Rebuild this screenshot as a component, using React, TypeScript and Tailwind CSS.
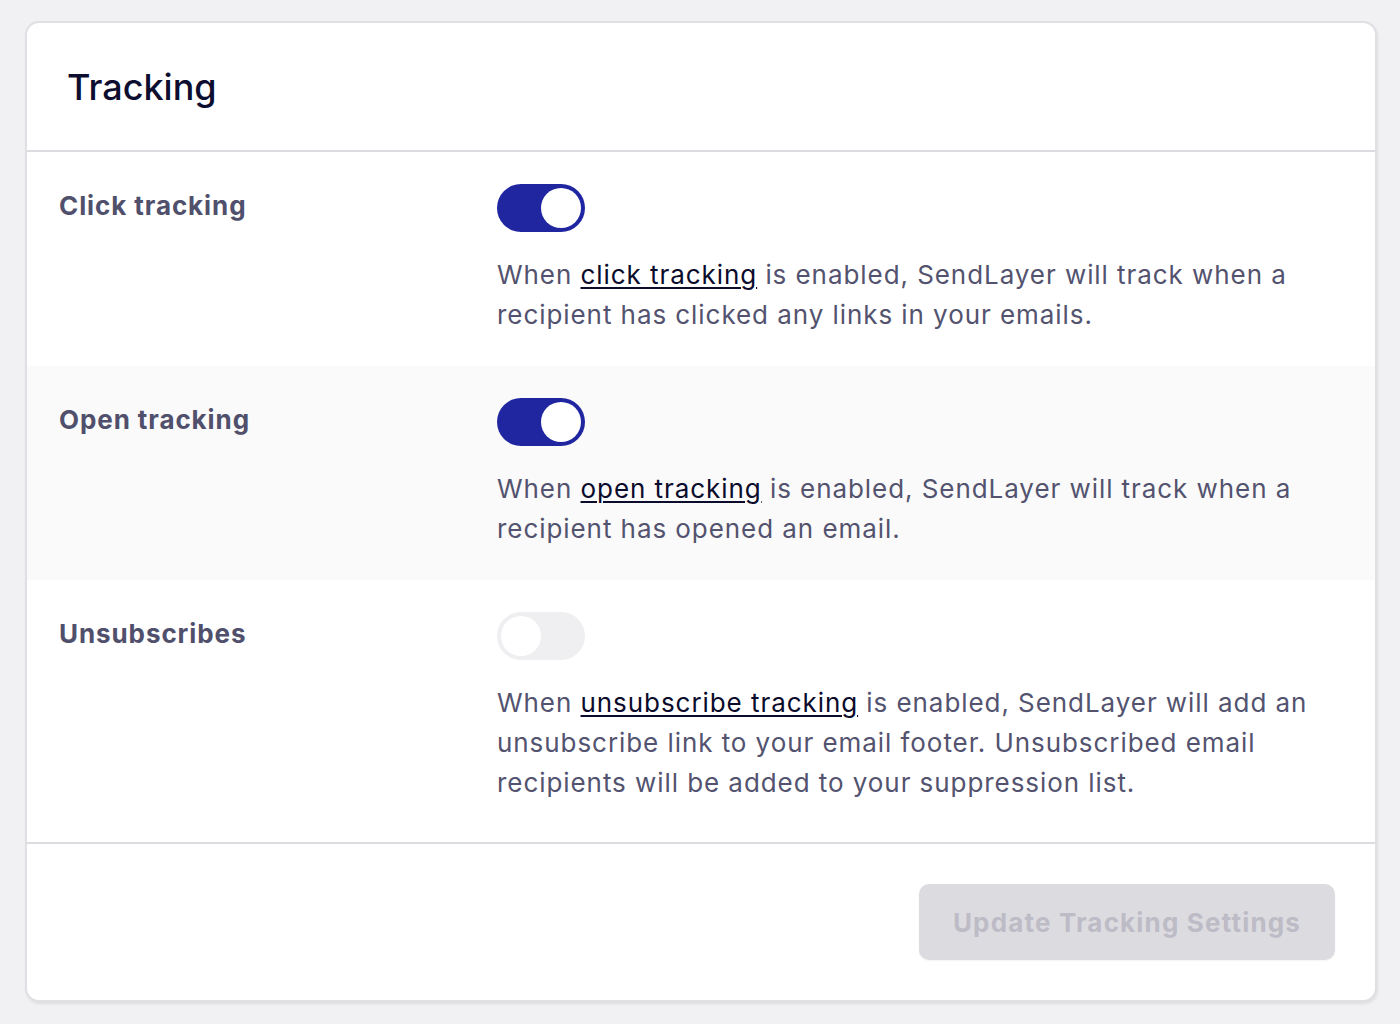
import React from "react";

function Toggle({ on }: { on: boolean }) {
  return (
    <div
      className={`relative w-[88px] h-[48px] rounded-full ${on ? "bg-[#2026a0]" : "bg-[#efeff1]"}`}
    >
      <div
        className={`absolute top-[4px] w-[40px] h-[40px] rounded-full bg-white ${on ? "left-[44px]" : "left-[4px]"}`}
      />
    </div>
  );
}

function Row({
  label,
  on,
  children,
  gray,
  last,
}: {
  label: string;
  on: boolean;
  children: React.ReactNode;
  gray?: boolean;
  last?: boolean;
}) {
  return (
    <div
      className={`flex pl-[32px] pr-[32px] pt-[32px] ${last ? "pb-[39px]" : "pb-[31px]"} ${gray ? "bg-[#fafafa]" : "bg-white"}`}
    >
      <div className="w-[438px] shrink-0 pt-[2px] text-[26px] leading-[40px] font-bold tracking-[0.035em] text-[#50506c]">
        {label}
      </div>
      <div className="flex-1 flex flex-col">
        <Toggle on={on} />
        <p className="mt-[23px] text-[26px] leading-[40px] text-[#53536f] tracking-[0.036em]">
          {children}
        </p>
      </div>
    </div>
  );
}

export default function App() {
  return (
    <div
      className="min-h-[1024px] bg-[#f1f1f3] pl-[25px] pr-[23px] pt-[21px] pb-[23px]"
      style={{ fontFamily: "Inter, 'Noto Sans', sans-serif" }}
    >
      <div className="bg-white border-2 border-[#e0dfe4] rounded-[14px] shadow-[1px_2px_3px_rgba(0,0,0,0.08)] overflow-hidden">
        <div className="h-[129px] border-b-2 border-[#dcdbe0] flex items-center pl-[40px]">
          <h1 className="text-[36px] font-medium text-[#0d0d2f] leading-none">Tracking</h1>
        </div>
        <Row label="Click tracking" on={true}>
          When{" "}
          <a className="underline text-[#0b0b2b] underline-offset-[3px] decoration-[2px]">click tracking</a>{" "}
          is enabled, SendLayer will track when a recipient has clicked any links in your emails.
        </Row>
        <Row label="Open tracking" on={true} gray>
          When{" "}
          <a className="underline text-[#0b0b2b] underline-offset-[3px] decoration-[2px]">open tracking</a>{" "}
          is enabled, SendLayer will track when a recipient has opened an email.
        </Row>
        <Row label="Unsubscribes" on={false} last>
          When{" "}
          <a className="underline text-[#0b0b2b] underline-offset-[3px] decoration-[2px]">unsubscribe tracking</a>{" "}
          is enabled, SendLayer will add an unsubscribe link to your email footer. Unsubscribed email recipients will be added to your suppression list.
        </Row>
        <div className="border-t-2 border-[#dcdbe0] flex justify-end pt-[40px] pb-[40px] pr-[40px]">
          <button className="w-[416px] h-[76px] rounded-[10px] bg-[#dcdbe0] text-[#bdbcc6] text-[26px] font-bold tracking-[0.045em] shadow-[0_1px_2px_rgba(0,0,0,0.05)]">
            Update Tracking Settings
          </button>
        </div>
      </div>
    </div>
  );
}
